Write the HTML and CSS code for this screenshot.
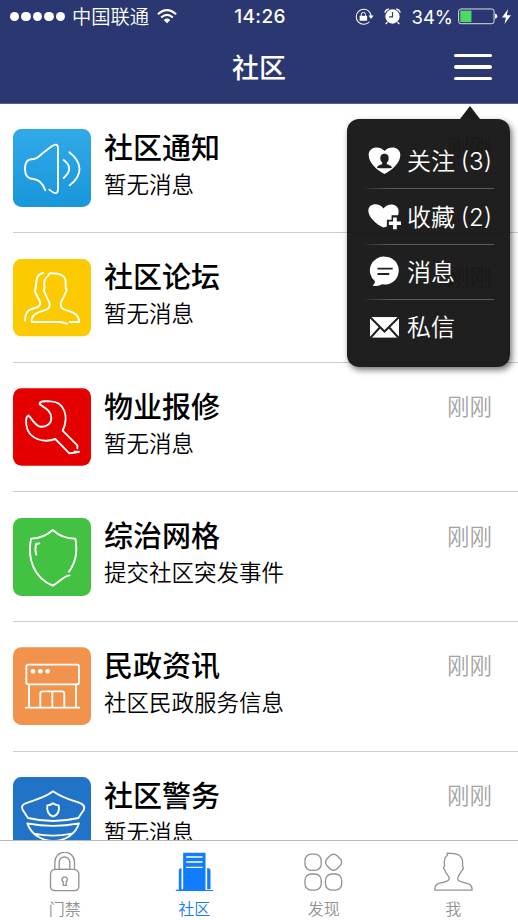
FILE: index.html
```html
<!DOCTYPE html>
<html lang="zh-CN">
<head>
<meta charset="utf-8">
<title>社区</title>
<link rel="stylesheet" href="styles.css">
</head>
<body>
<div class="phone">
  <header class="header">
    <div class="status">
      <div class="status-left">
        <span class="dots"><i></i><i></i><i></i><i></i><i></i></span>
        <span class="carrier">中国联通</span>
        <svg class="wifi" viewBox="0 0 60 46"><g fill="none" stroke="#fff" stroke-width="6"><path d="M2 16Q30-9 58 16"/><path d="M12 26Q30 10 48 26"/></g><path d="M20 34Q30 25 40 34L30 44Z" fill="#fff"/></svg>
      </div>
      <div class="clock">14:26</div>
      <div class="status-right">
        <svg class="lock-rot" viewBox="296 22 56 52"><path d="M340 35A23 23 0 1 0 339 64M344 46A23 23 0 0 0 335 30" fill="none" stroke="#fff" stroke-width="3.2"/><path d="M336 45h16l-8 11z" fill="#fff"/><path d="M309 46h23v15h-23z" fill="#fff"/><path d="M314 47v-5a6.500 6.500 0 0 1 13 0v5" fill="none" stroke="#fff" stroke-width="3"/></svg>
        <svg class="alarm" viewBox="383 24 50 50"><circle cx="408" cy="49" r="21" fill="#fff"/><path d="M385 37Q388 29 397 27M431 37Q428 29 419 27M393 66l-5 5M423 66l5 5" stroke="#fff" stroke-width="4" fill="none"/><path d="M408 36v14h-10" stroke="#2b3770" stroke-width="3.500" fill="none"/></svg>
        <span class="percent">34%</span>
        <svg class="battery" viewBox="594 26 122 50"><rect x="596" y="28" width="108" height="45" rx="7" fill="none" stroke="#dfe1ee" stroke-width="3"/><path d="M601 33h34v35h-34z" fill="#4cd964"/><path d="M707 42q7 2 7 8t-7 8z" fill="#fff"/></svg>
        <svg class="bolt" viewBox="728 26 28 46"><path d="M747 26L728 52h12l-4 20 20-27h-13z" fill="#fff"/></svg>
      </div>
    </div>
    <div class="nav"><h1>社区</h1><button class="menu-btn" aria-label="菜单"><i></i><i></i><i></i></button></div>
  </header>

  <main class="list">
    <article class="row">
      <svg class="tile" viewBox="39 43 234 234"><defs><linearGradient id="sky" x2="0" y2="1"><stop stop-color="#31a9e8"/><stop offset="1" stop-color="#1997db"/></linearGradient></defs><rect x="39" y="43" width="234" height="234" rx="25" fill="url(#sky)"/><g class="line"><path d="M136 227C130 210 118 195 101 193C85 193 75 184 75 164C75 141 82 133 101 133C112 132 115 127 124 119L155 95Q173 82 174 101V220C175 239 165 240 148 225"/><path d="M191 136Q224 160 191 190M208 113C248 145 249 181 209 212"/></g></svg>
      <div class="copy"><h2>社区通知</h2><p>暂无消息</p></div><time>刚刚</time>
    </article>
    <article class="row">
      <svg class="tile" viewBox="39 41 234 234"><rect x="39" y="41" width="234" height="232" rx="25" fill="#fcca00"/><g class="line"><path d="M130 83C107 87 110 105 107 128C101 138 108 147 116 160C124 176 121 184 105 188C84 193 76 199 75 226"/><path d="M201 235Q193 232 180 230H95Q94 213 108 205C126 193 149 198 149 178C149 165 138 157 134 141Q129 135 134 128C130 113 134 97 144 92L149 84C177 83 199 88 197 115V128Q203 133 196 143C192 158 183 163 182 176C180 194 201 193 219 202Q237 211 238 230H209"/></g></svg>
      <div class="copy"><h2>社区论坛</h2><p>暂无消息</p></div><time>刚刚</time>
    </article>
    <article class="row">
      <svg class="tile" viewBox="39 40 234 234"><rect x="39" y="41" width="234" height="232" rx="25" fill="#e50000"/><g class="line"><path d="M232 221V212L188 168C207 128 195 78 148 80C139 80 117 77 119 89C132 99 154 106 154 131C153 149 137 158 119 156C104 151 94 131 86 122C78 124 78 142 79 151C84 191 128 207 166 193L208 236L237 232M223 231h14"/></g></svg>
      <div class="copy"><h2>物业报修</h2><p>暂无消息</p></div><time>刚刚</time>
    </article>
    <article class="row">
      <svg class="tile" viewBox="39 39 234 234"><rect x="39" y="39" width="234" height="234" rx="25" fill="#43c143"/><g class="line"><path d="M207 200C226 174 233 137 226 101C199 101 179 94 158 75C138 94 118 100 93 101C81 161 101 217 158 242C178 233 187 214 209 211M109 149Q104 135 108 117L118 115"/></g></svg>
      <div class="copy"><h2>综治网格</h2><p>提交社区突发事件</p></div><time>刚刚</time>
    </article>
    <article class="row">
      <svg class="tile" viewBox="39 38 234 234"><rect x="39" y="39" width="234" height="233" rx="25" fill="#f1934d"/><g class="line"><rect x="79" y="91" width="158" height="59" rx="6"/><path d="M87 151v69M228 151v69M77 220h161M121 220v-42q0-7 7-7h58q7 0 7 7v42M157 172v47"/></g><g fill="#fff"><circle cx="99" cy="111" r="7"/><circle cx="121" cy="111" r="7"/><circle cx="143" cy="111" r="7"/></g></svg>
      <div class="copy"><h2>民政资讯</h2><p>社区民政服务信息</p></div><time>刚刚</time>
    </article>
    <article class="row">
      <svg class="tile" viewBox="39 37 234 234"><rect x="39" y="37" width="234" height="234" rx="25" fill="#2173c8"/><g class="line"><path d="M159 80C132 101 105 105 77 116Q62 121 68 135L84 160Q159 178 235 160L251 136Q257 123 242 116C216 106 190 102 159 80ZM82 176Q159 191 237 176C217 243 108 249 82 176ZM102 207Q159 219 216 207"/><path d="M159 116Q165 121 176 122C180 141 172 151 159 156C147 151 139 142 142 122Q152 122 159 116Z"/></g></svg>
      <div class="copy"><h2>社区警务</h2><p>暂无消息</p></div><time>刚刚</time>
    </article>
  </main>

  <nav class="tabs">
    <a class="tab"><svg viewBox="136 260 116 120"><g fill="none" stroke="#929292" stroke-width="4"><path d="M165 312V290a29 29 0 0 1 59 0V312M178 312V291a16 16 0 0 1 32 0V312Z"/><path d="M165 312H224Q237 315 237 327V363Q237 376 224 376H165Q152 376 152 363V327Q152 315 165 312Z"/><path d="M190 349a8 8 0 1 1 9 0v11h-9z"/></g></svg><span>门禁</span></a>
    <a class="tab active"><svg viewBox="525 260 116 120"><path fill="#127dfb" d="M549 262h67v112h23v3H527v-4h9V314q0-5 8-6v64h5zM621 308q10 1 10 8v56h-10z"/><path d="M558 275h49M558 290h49M558 306h49" stroke="#fff" stroke-width="4"/></svg><span>社区</span></a>
    <a class="tab"><svg viewBox="192 260 118 120"><g fill="none" stroke="#929292" stroke-width="4"><rect x="195" y="266" width="49" height="49" rx="19"/><rect x="195" y="326" width="49" height="49" rx="19"/><rect x="257" y="326" width="49" height="49" rx="19"/><rect x="260" y="269" width="43" height="43" rx="15" transform="rotate(45 281.500 290.500)"/></g></svg><span>发现</span></a>
    <a class="tab"><svg viewBox="581 260 118 120"><path d="M621 263C650 263 672 267 667 302Q673 308 666 315C660 326 651 333 653 343C655 352 682 350 692 360Q697 366 696 375H584Q583 360 592 356C605 349 627 353 627 340C627 331 616 325 613 313Q607 307 613 301C611 287 614 275 621 270Z" fill="none" stroke="#929292" stroke-width="4"/></svg><span>我</span></a>
  </nav>

  <div class="popover">
    <a><svg viewBox="84 136 98 86"><path d="M133 219C113 210 86 187 86 163C86 139 117 133 133 151C149 133 180 139 180 163C180 187 153 210 133 219Z" fill="#fff"/><path d="M133 159c9 0 14 6 12 18q0 4-5 8v5c8 3 14 3 15 11q-22 2-44 0c1-8 7-8 15-11v-5q-5-4-5-8c-2-12 3-18 12-18z" fill="#202020"/></svg><span>关注 (3)</span></a>
    <a><svg viewBox="84 306 98 86"><path d="M130 382C110 373 85 352 85 331C86 309 116 306 130 325C144 306 175 311 175 334C175 358 150 376 130 382Z" fill="#fff"/><path d="M164 345v48M140 369h48" stroke="#202020" stroke-width="20"/><path d="M164 352v35M146 369h36" stroke="#fff" stroke-width="11"/></svg><span>收藏 (2)</span></a>
    <a><svg viewBox="84 58 98 98"><path d="M134 60a43 44 0 1 1-8 87q-15 9-31 4q8-5 8-13A44 44 0 0 1 134 60z" fill="#fff"/><path d="M111 98h48M111 115h37" stroke="#202020" stroke-width="6"/></svg><span>消息</span></a>
    <a><svg viewBox="84 236 98 76"><path d="M90 243h86v61H90z" fill="#fff"/><path d="M89 242L133 286L177 242M90 306L119 274M176 306L147 274" fill="none" stroke="#202020" stroke-width="6"/></svg><span>私信</span></a>
  </div>
</div>
</body>
</html>
```
FILE: styles.css
```css
* { box-sizing: border-box; margin: 0; padding: 0; }
body { background: #fff; font-family: Inter, "Noto Sans CJK SC", sans-serif; }
.phone { position: relative; display: flex; flex-direction: column; width: 518px; height: 920px; overflow: hidden; }
svg { display: block; flex: none; }

.header { flex: none; height: 104px; background: #2b3770; color: #fff; border-bottom: 1px solid #565d8d; }
.status { display: grid; grid-template-columns: 1fr auto 1fr; align-items: center; height: 33px; padding: 0 8px 0 10px; }
.status-left, .status-right { display: flex; align-items: center; }
.status-right { justify-content: flex-end; }
.dots { display: flex; gap: 2px; margin-right: 7px; }
.dots i { width: 9.4px; height: 9.4px; border-radius: 50%; background: #fff; }
.carrier { font-size: 19.3px; line-height: 30px; font-weight: 350; }
.wifi { width: 20px; height: 15px; margin-left: 8px; }
.clock { font-size: 19px; font-weight: 500; letter-spacing: .35px; }
.lock-rot { width: 19px; height: 17px; }
.alarm { width: 17px; height: 17px; margin-left: 10px; }
.percent { font-size: 18.500px; margin: 0 5px 0 10px; }
.battery { width: 40px; height: 17px; }
.bolt { width: 9px; height: 15px; margin: 0 -1px 0 4px; }
.nav { display: grid; grid-template-columns: 1fr auto 1fr; align-items: center; height: 70px; padding: 2px 26px 0; }
.nav h1 { grid-column: 2; font-size: 27px; line-height: 40px; font-weight: 500; }
.menu-btn { display: flex; flex-direction: column; gap: 8px; justify-self: end; width: 38px; margin-top: -4px; border: 0; background: none; }
.menu-btn i { height: 3.2px; border-radius: 2px; background: #fff; }

.list { flex: 1; min-height: 0; overflow: hidden; padding-left: 13px; }
.row { display: flex; align-items: flex-start; height: 129.6px; padding: 25.400px 26px 0 0; border-bottom: 1px solid #ccc; }
.row:first-child { height: 129.2px; }
.tile { width: 78px; height: 78px; }
.line { fill: none; stroke: #fff; stroke-width: 5.6; stroke-linecap: round; stroke-linejoin: round; }
.copy { flex: 1; margin-left: 13px; padding-top: 1.600px; color: #000; }
.copy h2 { font-size: 29px; line-height: 36px; font-weight: 500; }
.copy p { font-size: 22.500px; line-height: 35px; font-weight: 350; }
.row time { padding-top: 1px; font-size: 22.500px; line-height: 36px; font-weight: 350; color: #a3a3a3; }

.tabs { flex: none; display: grid; grid-template-columns: repeat(4, 1fr); height: 80px; border-top: 1px solid #b7b7b7; background: #fff; }
.tab { display: flex; flex-direction: column; align-items: center; padding-top: 11px; color: #929292; }
.tab svg { width: 39px; height: 40px; }
.tab span { margin-top: 5px; font-size: 16px; line-height: 24px; font-weight: 350; }
.tab.active { color: #127dfb; }

.popover { position: absolute; left: 347px; top: 119px; width: 163px; height: 248px; padding: 14px 16px 0; border-radius: 12px; background: rgba(14, 14, 14, .93); box-shadow: 2px 3px 6px rgba(0, 0, 0, .55); color: #fff; }
.popover::before { content: ""; position: absolute; left: 113px; top: -13px; border: solid transparent; border-width: 0 10px 13px; border-bottom-color: #1b1b1b; }
.popover a { display: flex; align-items: center; height: 55.400px; padding-left: 5px; }
.popover a + a { border-top: 1px solid; border-image: linear-gradient(90deg, transparent, #5b5b5b 20%, #5b5b5b) 1; }
.popover svg { width: 33px; height: 31px; }
.popover a:nth-child(1) svg, .popover a:nth-child(2) svg { height: 29px; }
.popover span { margin: 2px 0 0 6px; font-size: 24px; line-height: 36px; font-weight: 350; white-space: nowrap; word-spacing: -1px; }
```
